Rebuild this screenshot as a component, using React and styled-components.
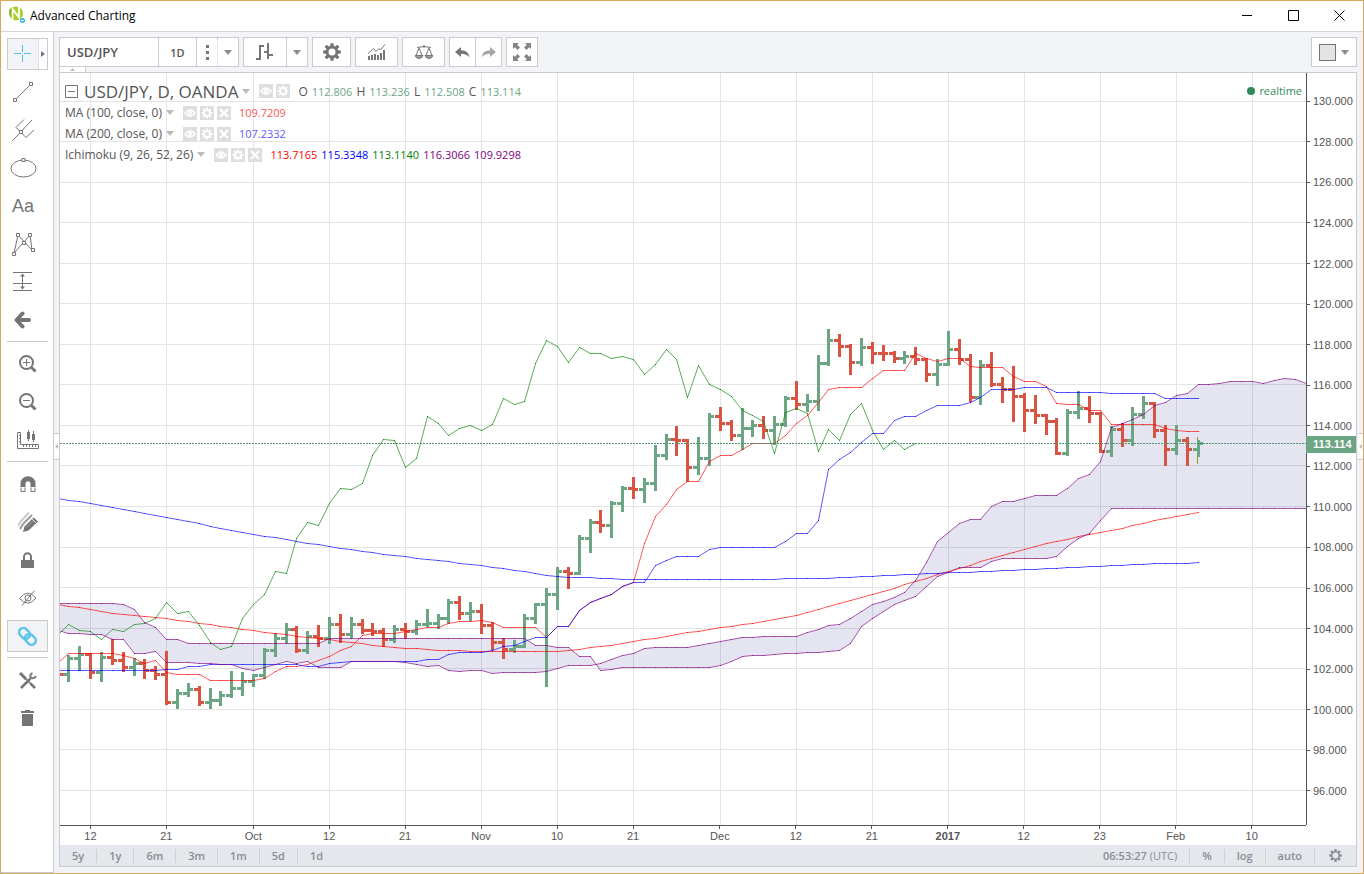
import { Fragment } from "react";
import styled, { createGlobalStyle } from "styled-components";

const GlobalStyle = createGlobalStyle`
    * {
        box-sizing: border-box;
    }
    body {
        margin: 0;
        font-family: "Open Sans", "Noto Sans", sans-serif;
        font-size: 12px;
        color: #555;
    }
    button, input {
        font: inherit;
        color: inherit;
        margin: 0;
        padding: 0;
        border: 0;
        background: none;
    }
    svg {
        display: block;
    }
`

/* ---------- chart data ---------- */

const UP = '#6ba583';
const DOWN = '#d75442';
const BAR_START = 68.45;
const BAR_STEP = 76 / 7;

// open, high, low, close in chart units (y grows downwards)
const bars = [
    [674, 655, 682, 658], [658, 646, 671, 654], [654, 653, 679, 672], [672, 652, 682, 657],
    [657, 639, 665, 660], [660, 652, 672, 667], [667, 658, 676, 663], [663, 659, 679, 670],
    [670, 666, 680, 674], [674, 651, 705, 702], [702, 689, 709, 693], [693, 683, 697, 689],
    [689, 686, 706, 702], [702, 688, 709, 700], [700, 691, 706, 695], [695, 671, 698, 688],
    [688, 672, 696, 681], [681, 674, 687, 675], [675, 648, 679, 650], [650, 633, 657, 638],
    [638, 623, 643, 629], [629, 626, 653, 650], [650, 631, 654, 636], [636, 625, 647, 638],
    [638, 617, 644, 624], [624, 614, 643, 634], [634, 617, 638, 624], [624, 619, 634, 630],
    [630, 623, 636, 631], [631, 628, 647, 639], [639, 625, 643, 629], [629, 623, 639, 631],
    [631, 620, 635, 624], [624, 609, 627, 623], [623, 614, 629, 618], [618, 599, 624, 602],
    [602, 596, 620, 613], [613, 602, 621, 611], [611, 604, 634, 625], [625, 622, 650, 642],
    [642, 638, 659, 649], [649, 640, 653, 646], [646, 614, 648, 618], [618, 603, 624, 604],
    [604, 588, 687, 594], [594, 567, 610, 571], [571, 567, 589, 573], [573, 535, 575, 538],
    [538, 519, 553, 522], [522, 510, 533, 525], [525, 501, 538, 503], [503, 486, 512, 488],
    [488, 477, 499, 489], [489, 478, 503, 483], [483, 445, 491, 455], [455, 434, 460, 439],
    [439, 426, 456, 440], [440, 439, 482, 467], [467, 437, 475, 458], [458, 413, 466, 416],
    [416, 407, 431, 423], [423, 420, 441, 435], [435, 408, 450, 428], [428, 420, 437, 425],
    [425, 416, 439, 430], [430, 416, 445, 424], [424, 396, 427, 398], [398, 381, 410, 404],
    [404, 394, 412, 401], [401, 355, 411, 363], [363, 329, 366, 340], [340, 334, 357, 346],
    [346, 344, 375, 362], [362, 338, 366, 347], [347, 342, 364, 353], [353, 345, 361, 353],
    [353, 351, 363, 358], [358, 351, 364, 356], [356, 347, 365, 359], [359, 358, 382, 374],
    [374, 359, 386, 364], [364, 331, 366, 349], [349, 339, 365, 359], [359, 354, 402, 397],
    [397, 360, 405, 365], [365, 352, 387, 384], [384, 377, 403, 389], [389, 366, 422, 396],
    [396, 393, 432, 410], [410, 395, 424, 415], [415, 414, 435, 421], [421, 418, 455, 453],
    [453, 409, 456, 412], [412, 391, 419, 408], [408, 396, 423, 413], [413, 412, 453, 451],
    [451, 426, 457, 429], [429, 423, 447, 440], [440, 407, 446, 414], [414, 396, 419, 403],
    [403, 402, 438, 430], [430, 425, 466, 449], [449, 425, 455, 440], [440, 437, 466, 449],
    [449, 440, 457, 443],
];

// series are [bar index, value] knots, filled in linearly between
const ma200 = [
    [-1, 498], [2, 503], [9, 517], [17, 534], [24, 546], [30, 555], [34, 560], [38, 565], [43, 573],
    [45, 576], [47, 577], [52, 579], [65, 579], [66, 578], [69, 578], [73, 576], [76, 575], [79, 573],
    [82, 572], [84, 571], [88, 569], [92, 567], [96, 565], [100, 563], [102, 563], [104, 562],
];
const ma100 = [
    [-1, 604], [2, 609], [4, 613], [9, 618], [13, 624], [17, 630], [19, 633], [22, 637], [24, 639],
    [26, 642], [30, 647], [33, 649], [35, 650], [38, 651], [44, 651], [46, 650], [48, 647], [50, 645],
    [52, 641], [56, 634], [60, 627], [64, 621], [67, 615], [70, 606], [74, 594], [78, 581], [80, 574],
    [82, 568], [84, 561], [86, 555], [88, 549], [90, 543], [92, 539], [93, 536], [95, 532], [97, 528],
    [98, 525], [100, 520], [102, 516], [104, 512],
];
const tenkan = [
    [-1, 662], [0, 653], [4, 653], [5, 655], [6, 658], [7, 663], [8, 660], [9, 672], [10, 674], [12, 674],
    [13, 680], [17, 680], [18, 678], [19, 671], [20, 666], [21, 666], [22, 664], [23, 660], [24, 656],
    [25, 650], [26, 646], [27, 635], [28, 633], [30, 633], [31, 631], [33, 627], [34, 627], [35, 623],
    [36, 621], [37, 621], [38, 620], [39, 622], [40, 627], [43, 627], [44, 637], [45, 626], [46, 626],
    [47, 610], [48, 602], [49, 598], [50, 594], [51, 586], [52, 582], [53, 543], [54, 516], [55, 504],
    [56, 489], [57, 481], [58, 481], [59, 461], [60, 455], [61, 455], [62, 449], [63, 443], [65, 443],
    [66, 435], [67, 423], [68, 415], [69, 402], [70, 389], [71, 387], [73, 387], [74, 378], [75, 370],
    [77, 370], [78, 353], [79, 358], [80, 361], [81, 358], [82, 358], [83, 366], [84, 367], [86, 367],
    [87, 376], [88, 381], [89, 381], [90, 386], [91, 403], [92, 404], [93, 404], [94, 410], [95, 410],
    [96, 424], [100, 424], [101, 428], [102, 430], [103, 431], [104, 431],
];
const kijun = [
    [-1, 670], [8, 670], [9, 669], [10, 669], [11, 666], [12, 666], [13, 664], [21, 664], [22, 666], [23, 666],
    [24, 663], [26, 661], [32, 661], [33, 659], [34, 659], [35, 654], [36, 652], [38, 652], [39, 650],
    [40, 646], [41, 645], [42, 641], [43, 637], [44, 637], [45, 626], [46, 626], [47, 610], [48, 602],
    [49, 598], [50, 594], [51, 586], [52, 582], [53, 582], [54, 565], [55, 560], [56, 556], [58, 556],
    [59, 549], [60, 547], [65, 547], [66, 541], [67, 533], [68, 533], [69, 520], [70, 469], [71, 459],
    [72, 452], [73, 442], [74, 433], [75, 433], [76, 420], [77, 416], [78, 416], [79, 410], [80, 405],
    [82, 405], [83, 402], [84, 397], [85, 389], [87, 389], [88, 387], [90, 387], [91, 392], [95, 392],
    [96, 393], [100, 393], [101, 398], [104, 398],
];
const spanA = [
    [-1, 630], [0, 633], [3, 634], [4, 639], [5, 639], [6, 653], [7, 653], [8, 651], [9, 662], [11, 662],
    [12, 663], [15, 664], [16, 668], [17, 670], [18, 667], [19, 664], [20, 661], [21, 663], [22, 661],
    [23, 667], [25, 667], [26, 661], [30, 661], [31, 662], [32, 664], [33, 666], [34, 665], [35, 670],
    [36, 671], [37, 670], [38, 670], [39, 673], [40, 672], [43, 672], [44, 671], [45, 668], [46, 665],
    [48, 665], [49, 663], [50, 659], [51, 655], [52, 653], [53, 648], [54, 647], [57, 647], [58, 645],
    [60, 641], [62, 637], [64, 636], [67, 636], [68, 632], [70, 625], [71, 624], [72, 618], [74, 604],
    [76, 597], [77, 592], [78, 580], [79, 562], [80, 541], [81, 532], [82, 523], [83, 519], [84, 519],
    [85, 506], [86, 501], [87, 501], [89, 495], [91, 495], [92, 488], [93, 478], [94, 474], [95, 461],
    [96, 427], [97, 423], [98, 419], [99, 414], [100, 405], [101, 402], [102, 395], [103, 393], [104, 384],
    [105, 384], [107, 381], [109, 381], [110, 383], [111, 380], [112, 378], [113, 379], [114, 383], [115, 384],
];
const spanB = [
    [-1, 603], [4, 603], [5, 604], [6, 609], [7, 622], [8, 627], [9, 639], [10, 639], [11, 643], [23, 643],
    [24, 638], [42, 638], [43, 645], [44, 645], [45, 647], [46, 647], [47, 656], [48, 656], [49, 670],
    [51, 667], [59, 667], [60, 665], [62, 656], [66, 653], [69, 652], [71, 650], [72, 643], [73, 626],
    [74, 618], [76, 604], [78, 596], [79, 586], [80, 576], [81, 572], [82, 567], [84, 567], [85, 561],
    [86, 558], [90, 558], [91, 556], [92, 546], [93, 538], [94, 533], [95, 520], [96, 508], [115, 508],
];
// the lagging span is the close, 26 bars back
const chikou = bars.slice(25).map((bar, n) => [n - 1, bar[3]]);

const timeTicks = [
    [2, '12'], [9, '21'], [17, 'Oct'], [24, '12'], [31, '21'], [38, 'Nov'], [45, '10'], [52, '21'],
    [60, 'Dec'], [67, '12'], [74, '21'], [81, '2017'], [88, '12'], [95, '23'], [102, 'Feb'], [109, '10'],
];
const prices = Array.from({ length: 18 }, (_, n) => (130 - n * 2).toFixed(3));

const barX = (i) => Math.round(BAR_START + i * BAR_STEP);

function fill(knots) {
    const points = [];
    knots.forEach(([i, y], n) => {
        if (n > 0) {
            const [i0, y0] = knots[n - 1];
            for (let k = i0 + 1; k < i; k++) {
                points.push([barX(k), Math.round(y0 + ((y - y0) * (k - i0)) / (i - i0))]);
            }
        }
        points.push([barX(i), y]);
    });
    return points;
}

const toPath = (points) => points.map(([x, y], n) => `${n ? 'L' : 'M'}${x + 0.5} ${y + 0.5}`).join('');

function Series({ knots, color }) {
    const points = fill(knots);
    return (
        <g stroke={color} fill="none">
            <path d={toPath(points)} strokeOpacity="0.65" />
            <path d={points.map(([x, y]) => `M${x} ${y + 0.5}h1`).join('')} strokeOpacity="0.8" shapeRendering="crispEdges" />
        </g>
    );
}

function Bar({ bar, index }) {
    const [open, high, low, close] = bar;
    const x = barX(index);
    return (
        <path
            fill={close <= open && index !== 75 ? UP : DOWN}
            d={`M${x - 1} ${high}h3V${low}h-3zM${x - 5} ${open - 1}h4v3h-4zM${x + 2} ${close - 1}h3v3h-3z`}
        />
    );
}

function PriceChart() {
    const cloud = toPath(fill(spanA)) + toPath(fill(spanB).reverse()).replace('M', 'L') + 'Z';
    return (
        <ChartSvg viewBox="60 73 1246 752" preserveAspectRatio="none" role="img" aria-label="USD/JPY daily chart">
            <g stroke="#e4e4e4" shapeRendering="crispEdges">
                {timeTicks.map(([i]) => (
                    <path key={i} d={`M${barX(i) + 0.5} 73V825`} />
                ))}
                {prices.map((price, n) => (
                    <path key={price} d={`M60 ${Math.floor(101.2 + n * 40.53) + 0.5}H1306`} />
                ))}
            </g>
            <path d={cloud} fill="#000080" fillOpacity="0.1" />
            <g shapeRendering="crispEdges">
                <path d="M60 673h3v3h-3z" fill={DOWN} />
                {bars.map((bar, i) => <Bar key={i} bar={bar} index={i} />)}
                <path d="M1197.5 437v3M1197.5 457v7" stroke="#999915" />
            </g>
            <Series knots={ma100} color="#ff0000" />
            <Series knots={ma200} color="#0000ff" />
            <Series knots={tenkan} color="#ff0000" />
            <Series knots={kijun} color="#0000ff" />
            <Series knots={chikou} color="#008000" />
            <Series knots={spanA} color="#800080" />
            <Series knots={spanB} color="#800080" />
            <path d="M60 443.5H1306" stroke="#4f9470" strokeDasharray="2 1" shapeRendering="crispEdges" />
        </ChartSvg>
    );
}

/* ---------- icons ---------- */

function Icon({ w = 24, h = w, children, ...rest }) {
    return (
        <svg width={w} height={h} viewBox={`0 0 ${w} ${h}`} fill="none" stroke="#757575" aria-hidden="true" {...rest}>
            {children}
        </svg>
    );
}

const Caret = ({ color = '#8a8a8a' }) => (
    <Icon w={8} h={5} stroke="none"><path d="M0 0h8L4 5z" fill={color} /></Icon>
);

const cogPath = (c, outer, inner) => {
    let d = '';
    for (let n = 0; n < 8; n++) {
        const a = (n * Math.PI) / 4;
        [[-0.28, inner], [-0.17, outer], [0.17, outer], [0.28, inner]].forEach(([off, r], k) => {
            d += `${n || k ? 'L' : 'M'}${(c + Math.sin(a + off) * r).toFixed(2)} ${(c - Math.cos(a + off) * r).toFixed(2)}`;
        });
    }
    return d + 'Z';
};

const CogIcon = () => (
    <Icon w={18} stroke="none" fill="#757575">
        <path fillRule="evenodd" d={cogPath(9, 9, 6.4) + 'M12.5 9a3.5 3.5 0 1 0-7 0a3.5 3.5 0 1 0 7 0Z'} />
    </Icon>
);

const CogOutlineIcon = () => (
    <Icon w={13} stroke="none" fill="#8a8d92">
        <path fillRule="evenodd" d={cogPath(6.5, 6.5, 4.5) + 'M9.5 6.5a3 3 0 1 0-6 0a3 3 0 1 0 6 0Z'} />
    </Icon>
);

const Logo = () => (
    <Icon w={17} h={18} stroke="none">
        <circle cx="7" cy="7.5" r="7" fill="#a9d026" />
        <path d="M0 4L3 1L4 6L2 13z" fill="#7fb51c" />
        <path d="M3.5 15V3L10 11.500V0" stroke="#fff" strokeWidth="1.800" />
        <circle cx="13.500" cy="14.500" r="2.500" fill="#35b8ea" />
        <path d="M12 14.500h3" stroke="#fff" strokeWidth="1" />
    </Icon>
);

const sideIcons = {
    cross: (
        <Icon w={18} stroke="#4fc0e8">
            <path d="M8.500 0v7M8.500 10v7M0 8.500h7M10 8.500h7" />
        </Icon>
    ),
    trend: (
        <Icon w={21}>
            <path d="M3.500 16.500L16.500 3.500" />
            <path d="M16.500.500h3v3h-3zM.500 16.500h3v3h-3z" />
        </Icon>
    ),
    pitchfork: (
        <Icon w={23}>
            <path d="M0 22L7.500 14.500M10 11.500L20 1M4 8.500L12 .500M14 18.500L22 11M4 8.500L14 18.500" />
            <path d="M7.500 11.500h3v3h-3z" fill="#fff" />
        </Icon>
    ),
    ellipse: (
        <Icon w={27} h={20}>
            <ellipse cx="13.500" cy="10.500" rx="12.500" ry="8.500" />
            <path d="M12 .500h3v3h-3z" fill="#fff" />
        </Icon>
    ),
    pattern: (
        <Icon w={23}>
            <path d="M2 20L6 2L20 17L18 2L11 10L2 20" />
            <path d="M.500 19.500h3v3h-3zM4.500.500h3v3h-3zM10.500 8.500h3v3h-3zM16.500.500h3v3h-3zM19.500 15.500h3v3h-3z" fill="#fff" />
        </Icon>
    ),
    forecast: (
        <Icon w={20} h={20}>
            <path d="M0 .500h19M0 11.500h19M0 18.500h19M9.500 2v15" />
            <path d="M7 4.500L9.500 1.500L12 4.500zM7 14.500L9.500 17.500L12 14.500z" fill="#757575" stroke="none" />
        </Icon>
    ),
    back: (
        <Icon w={18}>
            <path d="M8.500 2.500L2.500 9L8.500 15.500M3 9H15" strokeWidth="4" strokeLinejoin="round" strokeLinecap="round" />
        </Icon>
    ),
    zoomIn: (
        <Icon w={18}>
            <circle cx="7.500" cy="7.500" r="6.500" strokeWidth="2" />
            <path d="M4 7.500h7M7.500 4v7" />
            <path d="M12.500 12.500L16.500 16.500" strokeWidth="3" />
        </Icon>
    ),
    zoomOut: (
        <Icon w={18}>
            <circle cx="7.500" cy="7.500" r="6.500" strokeWidth="2" />
            <path d="M4 7.500h7" />
            <path d="M12.500 12.500L16.500 16.500" strokeWidth="3" />
        </Icon>
    ),
    measure: (
        <Icon w={24} h={20}>
            <path d="M1.500 2.500h3v12h18v4h-21z" />
            <path d="M3 5.500h2M3 8.500h2M3 11.500h2M7.500 15v2M10.500 15v2M13.500 15v2M16.500 15v2M19.500 15v2" />
            <path d="M12.500 0v11M17.500 1v11" />
            <path d="M11 2h3v7h-3zM16 4h3v6h-3z" fill="#757575" stroke="none" />
        </Icon>
    ),
    magnet: (
        <Icon w={16} h={17}>
            <path d="M3 11V7.500a5 4.700 0 0 1 10 0V11" strokeWidth="5" />
            <path d="M1 11.500v4h4v-4M11 11.500v4h4v-4" />
        </Icon>
    ),
    pencils: (
        <Icon w={20} stroke="none">
            <path d="M0 14L3 9L11 0.500" stroke="#c8c8c8" strokeWidth="2" />
            <path d="M2 17L5 12L14 3" stroke="#a0a0a0" strokeWidth="2.200" />
            <path d="M5 20L6.500 14.500L15.500 5.500L20 9.500L10.500 18.500z" fill="#757575" />
            <path d="M8 15.500L15.500 8.500" stroke="#a5a5a5" />
            <path d="M14 7L18.500 11.500" stroke="#fff" strokeWidth="0.800" />
        </Icon>
    ),
    lock: (
        <Icon w={14} h={17}>
            <path d="M0 8h13v8H0z" fill="#757575" stroke="none" />
            <path d="M3 8V5a3.500 3.700 0 0 1 7 0V8" strokeWidth="2" />
        </Icon>
    ),
    hide: (
        <Icon w={18} h={16}>
            <path d="M.500 8.500Q8.500-2 17 8Q9 18 .500 8.500zM3 15.500L15.500.500" />
            <circle cx="9" cy="8" r="3" />
        </Icon>
    ),
    link: (
        <Icon w={19} h={19} stroke="#5bc4ea" strokeWidth="2.500">
            <rect x="-5.800" y="-4.200" width="11.600" height="8.400" rx="4" transform="translate(6.400 6.400) rotate(45)" />
            <rect x="-5.800" y="-4.200" width="11.600" height="8.400" rx="4" transform="translate(12.400 12.400) rotate(45)" />
        </Icon>
    ),
    tools: (
        <Icon w={18} h={17}>
            <path d="M1 1L7 7" strokeWidth="3" />
            <path d="M6 6L15 15" strokeWidth="1.500" />
            <path d="M11.500 11.500L16 16" strokeWidth="2.500" />
            <path d="M2 16L11.500 6.500" strokeWidth="2.500" />
            <path d="M13.500 1Q10 3 12 5.500Q14.500 7.500 17 4" strokeWidth="2" />
        </Icon>
    ),
    trash: (
        <Icon w={14} h={16} stroke="none" fill="#757575">
            <path d="M1 4h11v12H1zM0 1h4V0h5v1h4v2H0z" />
        </Icon>
    ),
};

const BarsIcon = () => (
    <Icon w={18} h={18} strokeWidth="2">
        <path d="M4 2v15M0 16h3M5 3h3M12 0v16M8 9h3M13 12h4" />
    </Icon>
);

const IndicatorsIcon = () => (
    <Icon w={18} h={16} stroke="none" fill="#757575">
        <path d="M0 12h2v4H0zM3 11h2v5H3zM6 10h2v6H6zM9 11h2v5H9zM12 9h2v7h-2zM15 6h2v10h-2z" />
        <path d="M0 9.500L5.500 4.500L8 7.500L11 4.500L12.500 6L17 .500" fill="none" stroke="#757575" />
    </Icon>
);

const ScalesIcon = () => (
    <Icon w={18} h={15}>
        <path d="M2 2.500Q9 .500 16 2.500M9 0v3M4 3L1 10.500M4 3L7 10.500M14 3L11 10.500M14 3L17 10.500" />
        <path d="M0 10.500h8Q7 13.500 4 13.500T0 10.500zM10 10.500h8Q17 13.500 14 13.500T10 10.500z" fill="#9a9a9a" />
    </Icon>
);

const Arrow = ({ flip }) => (
    <Icon w={15} h={11} stroke="none" transform={flip ? 'scale(-1 1)' : undefined}>
        <path d="M6 0V3.200Q13.500 3.200 14.500 10.500Q11.500 6.800 6 6.800V10L0 5z" fill={flip ? '#a5a5a5' : '#757575'} />
    </Icon>
);

const ExpandIcon = () => (
    <Icon w={18} stroke="none" fill="#858585">
        {[0, 90, 180, 270].map((turn) => (
            <path key={turn} transform={`rotate(${turn} 9 9)`} d="M0 0h6L4.200 1.800L7 4.600L4.600 7L1.800 4.200L0 6z" />
        ))}
    </Icon>
);

const EyeGlyph = () => (
    <Icon w={14} stroke="#fff" strokeWidth="1.500">
        <path d="M2 7Q7 .500 12 7Q7 13.500 2 7z" />
        <circle cx="7" cy="7" r="1.500" />
    </Icon>
);
const CogGlyph = () => (
    <Icon w={14} stroke="none" fill="#fff">
        <path fillRule="evenodd" d={cogPath(7, 5.500, 4) + 'M9 7a2 2 0 1 0-4 0a2 2 0 1 0 4 0Z'} />
    </Icon>
);
const CloseGlyph = () => (
    <Icon w={14} stroke="#fff" strokeWidth="2"><path d="M3 3L11 11M11 3L3 11" /></Icon>
);

/* ---------- page parts ---------- */

const sideGroups = [
    [
        ['cross', 'Cross'], ['trend', 'Trend line'], ['pitchfork', 'Pitchfork'], ['ellipse', 'Ellipse'],
        ['text', 'Text'], ['pattern', 'XABCD pattern'], ['forecast', 'Long position'], ['back', 'Arrow'],
    ],
    [['zoomIn', 'Zoom in'], ['zoomOut', 'Zoom out'], ['measure', 'Measure']],
    [
        ['magnet', 'Magnet mode'], ['pencils', 'Stay in drawing mode'], ['lock', 'Lock drawings'],
        ['hide', 'Hide drawings'], ['link', 'Link drawings'],
    ],
    [['tools', 'Show tree'], ['trash', 'Remove drawings']],
];

function Sidebar() {
    return (
        <SideNav aria-label="Drawing tools">
            {sideGroups.map((group, g) => (
                <Fragment key={g}>
                    {g > 0 && <SideRule />}
                    <SideGroup>
                        {group.map(([name, label]) => (name === 'cross' ? (
                            <SplitTool key={name}>
                                <CrossButton type="button" aria-label={label}>{sideIcons.cross}</CrossButton>
                                <CrossMore type="button" aria-label="More cursors">
                                    <Icon w={4} h={6} stroke="none"><path d="M0 0v6L4 3z" fill="#757575" /></Icon>
                                </CrossMore>
                            </SplitTool>
                        ) : (
                            <SideButton
                                key={name}
                                type="button"
                                aria-label={label}
                                $active={name === 'link'}
                                $wide={g > 0}
                            >
                                {name === 'text' ? 'Aa' : sideIcons[name]}
                            </SideButton>
                        )))}
                    </SideGroup>
                </Fragment>
            ))}
        </SideNav>
    );
}

function Toolbar() {
    return (
        <Tools>
            <ToolGroup>
                <SymbolInput aria-label="Symbol" defaultValue="USD/JPY" />
                <ToolButton $w={38} $line="solid" type="button">1D</ToolButton>
                <ToolButton $w={21} $line="solid" type="button" aria-label="Intervals">
                    <Icon w={3} h={15} stroke="none"><path d="M0 0h3v3H0zM0 6h3v3H0zM0 12h3v3H0z" fill="#757575" /></Icon>
                </ToolButton>
                <ToolButton $w={21} $line="dotted" type="button" aria-label="More intervals"><Caret /></ToolButton>
            </ToolGroup>
            <ToolGroup>
                <ToolButton $w={42} type="button" aria-label="Bar style"><BarsIcon /></ToolButton>
                <ToolButton $w={21} $line="solid" type="button" aria-label="More bar styles"><Caret /></ToolButton>
            </ToolGroup>
            <ToolGroup>
                <ToolButton $w={37} type="button" aria-label="Properties"><CogIcon /></ToolButton>
            </ToolGroup>
            <ToolGroup>
                <ToolButton $w={41} type="button" aria-label="Indicators"><IndicatorsIcon /></ToolButton>
            </ToolGroup>
            <ToolGroup>
                <ToolButton $w={41} type="button" aria-label="Compare"><ScalesIcon /></ToolButton>
            </ToolGroup>
            <ToolGroup>
                <ToolButton $w={25} type="button" aria-label="Undo"><Arrow /></ToolButton>
                <ToolButton $w={26} $line="solid" type="button" aria-label="Redo"><Arrow flip /></ToolButton>
            </ToolGroup>
            <ToolGroup>
                <ToolButton $w={30} type="button" aria-label="Full screen"><ExpandIcon /></ToolButton>
            </ToolGroup>
            <LayoutButton type="button" aria-label="Layout">
                <Swatch />
                <Caret />
            </LayoutButton>
        </Tools>
    );
}

const glyphs = { Hide: <EyeGlyph />, Format: <CogGlyph />, Remove: <CloseGlyph /> };

const Chips = ({ names }) => (
    <ChipRow>
        {names.map((name) => <Chip key={name} type="button" aria-label={name}>{glyphs[name]}</Chip>)}
    </ChipRow>
);

const studies = [
    ['MA (100, close, 0)', [['109.7209', '#ff5555']]],
    ['MA (200, close, 0)', [['107.2332', '#5c5cf5']]],
    ['Ichimoku (9, 26, 52, 26)', [
        ['113.7165', '#ff0000'], ['115.3348', '#0000ff'], ['113.1140', '#008000'],
        ['116.3066', '#800080'], ['109.9298', '#800080'],
    ]],
];

function Legend() {
    return (
        <LegendBox>
            <LegendTitle>
                <Icon w={13}><path d="M.500.500h12v12H.500zM3 6.500h7" /></Icon>
                <h1>USD/JPY, D, OANDA</h1>
                <Caret color="#bbb" />
                <Chips names={['Hide', 'Format']} />
                <Quotes>
                    {[['O', '112.806'], ['H', '113.236'], ['L', '112.508'], ['C', '113.114']].map(([key, value]) => (
                        <Fragment key={key}>
                            <span>{key}</span>
                            <Value $color={UP}>{value}</Value>
                        </Fragment>
                    ))}
                </Quotes>
            </LegendTitle>
            {studies.map(([name, values]) => (
                <LegendRow key={name}>
                    <span>{name}</span>
                    <Caret color="#bbb" />
                    <Chips names={['Hide', 'Format', 'Remove']} />
                    <Quotes>
                        {values.map(([value, color]) => <Value key={value} $color={color}>{value}</Value>)}
                    </Quotes>
                </LegendRow>
            ))}
        </LegendBox>
    );
}

function TimeScale() {
    return (
        <TimeAxis>
            <TimeCell $span={28} />
            {timeTicks.map(([i, label], n) => (
                <TimeCell key={i} $span={n < timeTicks.length - 1 ? (timeTicks[n + 1][0] - i) * 10 : 50}>
                    <TimeLabel $bold={label === '2017'}>{label}</TimeLabel>
                </TimeCell>
            ))}
        </TimeAxis>
    );
}

function App() {
    return (
        <Window>
            <GlobalStyle />
            <TitleBar>
                <Logo />
                <WindowTitle>Advanced Charting</WindowTitle>
                <WindowButton type="button" aria-label="Minimize">
                    <Icon w={11} stroke="#000"><path d="M0 5.500h10" /></Icon>
                </WindowButton>
                <WindowButton type="button" aria-label="Maximize">
                    <Icon w={11} stroke="#000"><path d="M.500.500h10v10H.500z" /></Icon>
                </WindowButton>
                <WindowButton type="button" aria-label="Close">
                    <Icon w={11} stroke="#000"><path d="M.500.500L10.500 10.500M10.500.500L.500 10.500" /></Icon>
                </WindowButton>
            </TitleBar>
            <Body>
                <Sidebar />
                <Main>
                    <Toolbar />
                    <Tab type="button" aria-label="Collapse toolbar">
                        <Icon w={5} h={3} stroke="none"><path d="M0 3h5L2.500 0z" fill="#bbb" /></Icon>
                    </Tab>
                    <Panel>
                        <ChartArea>
                            <Plot>
                                <PriceChart />
                                <Legend />
                                <Realtime>realtime</Realtime>
                            </Plot>
                            <PriceAxis>
                                {prices.map((price) => <PriceLabel key={price}>{price}</PriceLabel>)}
                                <PriceTag>113.114</PriceTag>
                            </PriceAxis>
                            <TimeScale />
                        </ChartArea>
                        <Footer>
                            {['5y', '1y', '6m', '3m', '1m', '5d', '1d'].map((range) => (
                                <FootButton key={range} type="button">{range}</FootButton>
                            ))}
                            <Clock>06:53:27 <span>(UTC)</span></Clock>
                            {['%', 'log', 'auto'].map((mode) => <FootButton key={mode} type="button">{mode}</FootButton>)}
                            <FootButton type="button" aria-label="Chart settings"><CogOutlineIcon /></FootButton>
                        </Footer>
                    </Panel>
                    <Handle type="button" aria-label="Collapse tools" $side="left">
                        <Icon w={3} h={5} stroke="none"><path d="M3 0v5L0 2.500z" fill="#bbb" /></Icon>
                    </Handle>
                    <Handle type="button" aria-label="Open panel" $side="right">
                        <Icon w={3} h={5} stroke="none"><path d="M3 0v5L0 2.500z" fill="#bbb" /></Icon>
                    </Handle>
                </Main>
            </Body>
        </Window>
    );
}

/* ---------- styles ---------- */

const Window = styled.div`
    display: flex;
    flex-direction: column;
    height: 100vh;
    border: 1px solid #d9a95b;
    background: #f1f3f7;
`

const TitleBar = styled.header`
    display: flex;
    align-items: center;
    height: 31px;
    padding: 0 1px 2px 8px;
    background: #fff;
    border-bottom: 1px solid #d3d6d9;
`

const WindowTitle = styled.span`
    flex: 1;
    padding-left: 4px;
    color: #000;
`

const WindowButton = styled.button`
    display: flex;
    justify-content: center;
    align-items: center;
    width: 46px;
    height: 28px;
`

const Body = styled.div`
    display: flex;
    flex: 1;
    min-height: 0;
`

const SideNav = styled.nav`
    width: 53px;
    padding: 6px 5px 0 6px;
    background: #fff;
    border-right: 1px solid #c9cbcd;
    border-bottom: 1px solid #c9cbcd;
`

const SideGroup = styled.div`
    display: flex;
    flex-direction: column;
    gap: 6px;
`

const SideRule = styled.hr`
    height: 1px;
    margin: 5px 0 6px;
    border: 0;
    background: #c9cbcd;
`

const SideButton = styled.button`
    display: flex;
    justify-content: center;
    align-items: center;
    width: ${props => props.$wide ? '41px' : '32px'};
    height: 32px;
    color: #757575;
    font-family: "Liberation Sans", Arial, sans-serif;
    font-size: 18px;
    border: 1px solid ${props => props.$active ? '#c9cbcd' : 'transparent'};
    background: ${props => props.$active ? '#f1f3f7' : 'none'};
`

const SplitTool = styled.div`
    display: flex;
    width: 41px;
    height: 32px;
    border: 1px solid #c9cbcd;
`

const CrossButton = styled.button`
    display: flex;
    flex: 1;
    justify-content: center;
    align-items: center;
    background: #f1f3f7;
    border-right: 1px dotted #c9cbcd;
`

const CrossMore = styled.button`
    display: flex;
    justify-content: center;
    align-items: center;
    width: 8px;
`

const Main = styled.main`
    position: relative;
    display: flex;
    flex: 1;
    flex-direction: column;
    min-width: 0;
    padding: 5px 6px 6px 5px;
`

const Tools = styled.div`
    display: flex;
    gap: 4px;
    height: 30px;
`

const ToolGroup = styled.div`
    display: flex;
    background: #fff;
    border: 1px solid #c9cbcd;
`

const SymbolInput = styled.input`
    width: 98px;
    padding: 0 7px;
    font-size: 13px;
    font-weight: 600;
`

const ToolButton = styled.button`
    display: flex;
    justify-content: center;
    align-items: center;
    width: ${props => props.$w}px;
    font-size: 11px;
    font-weight: 600;
    ${props => props.$line && `border-left: 1px ${props.$line} #c9cbcd;`}
`

const LayoutButton = styled.button`
    display: flex;
    justify-content: center;
    align-items: center;
    gap: 5px;
    width: 46px;
    margin-left: auto;
    background: #fff;
    border: 1px solid #c9cbcd;
`

const Swatch = styled.span`
    width: 17px;
    height: 17px;
    background: #e4e4e4;
    border: 1px solid #757575;
`

const Tab = styled.button`
    display: flex;
    justify-content: center;
    align-items: center;
    width: 27px;
    height: 5px;
    background: #fff;
    border: solid #c9cbcd;
    border-width: 0 1px;
`

const Panel = styled.section`
    display: flex;
    flex: 1;
    flex-direction: column;
    min-height: 0;
    background: #fff;
    border: 1px solid #c9cbcd;
`

const ChartArea = styled.div`
    display: grid;
    flex: 1;
    grid-template-columns: 1fr 50px;
    grid-template-rows: 1fr 20px;
    min-height: 0;
    font-family: "Liberation Sans", Arial, sans-serif;
    font-size: 11px;
`

const Plot = styled.div`
    position: relative;
    min-width: 0;
    min-height: 0;
    overflow: hidden;
`

const ChartSvg = styled.svg`
    width: 100%;
    height: 100%;
`

const LegendBox = styled.div`
    position: absolute;
    top: 7px;
    left: 5px;
    font-family: "Open Sans", "Noto Sans", sans-serif;
    font-size: 12px;
`

const LegendRow = styled.div`
    display: flex;
    align-items: center;
    height: 21px;
    white-space: nowrap;

    > svg {
        margin: 0 9px 0 4px;
    }
`

const LegendTitle = styled(LegendRow)`
    height: 22px;

    > svg:first-child {
        margin: 0 6px 0 0;
    }
    h1 {
        margin: 0;
        font-size: 17px;
        font-weight: 400;
    }
`

const ChipRow = styled.span`
    display: flex;
    gap: 3px;
`

const Chip = styled.button`
    width: 14px;
    height: 14px;
    background: #dedede;
`

const Quotes = styled.span`
    display: flex;
    align-items: baseline;
    gap: 4px;
    padding-left: 8px;
`

const Value = styled.span`
    color: ${props => props.$color};
    font-size: 11px;
`

const Realtime = styled.div`
    position: absolute;
    top: 10px;
    right: 4px;
    display: flex;
    align-items: center;
    gap: 4px;
    color: #2e8b57;
    font-family: "Open Sans", "Noto Sans", sans-serif;
    font-size: 11px;

    &::before {
        content: '';
        width: 8px;
        height: 8px;
        border-radius: 50%;
        background: #2e8b57;
    }
`

const PriceAxis = styled.div`
    position: relative;
    display: flex;
    flex-direction: column;
    padding: 8px 0 14px;
    border-left: 1px solid #555;
`

const PriceLabel = styled.div`
    display: flex;
    flex: 1;
    align-items: center;

    &::before {
        content: '';
        width: 3px;
        height: 1px;
        margin-right: 3px;
        background: #555;
    }
`

const PriceTag = styled.div`
    position: absolute;
    top: 49%;
    left: -1px;
    right: 0;
    height: 17px;
    margin-top: -5px;
    padding-left: 7px;
    line-height: 17px;
    color: #fff;
    font-weight: 700;
    background: #6ba583;
`

const TimeAxis = styled.div`
    display: flex;
    border-top: 1px solid #555;
`

const TimeCell = styled.div`
    flex: ${props => props.$span} 0 0;
    min-width: 0;
`

const TimeLabel = styled.div`
    display: flex;
    flex-direction: column;
    align-items: center;
    width: 0;
    line-height: 14px;
    font-weight: ${props => props.$bold ? 700 : 400};

    &::before {
        content: '';
        width: 1px;
        height: 3px;
        background: #555;
    }
`

const Footer = styled.footer`
    display: flex;
    align-items: center;
    height: 21px;
    background: #e4e7ec;
    color: #8a8d92;
    font-size: 11px;
    font-weight: 600;
`

const FootButton = styled.button`
    display: flex;
    justify-content: center;
    height: 14px;
    padding: 0 12px;
    line-height: 13px;
    border-right: 1px solid #cdd0d4;

    &:nth-of-type(7), &:last-child {
        border-right: 0;
    }
    &:last-child {
        padding: 0 14px;
    }
`

const Clock = styled.span`
    height: 14px;
    margin-left: auto;
    padding-right: 12px;
    line-height: 13px;
    border-right: 1px solid #cdd0d4;

    span {
        font-weight: 400;
    }
`

const Handle = styled.button`
    position: absolute;
    top: calc(50% - 20px);
    ${props => props.$side}: 0;
    display: flex;
    justify-content: center;
    align-items: center;
    width: 5px;
    height: 27px;
    background: #fff;
    border: solid #c9cbcd;
    border-width: 1px 0;
`

export default App;
